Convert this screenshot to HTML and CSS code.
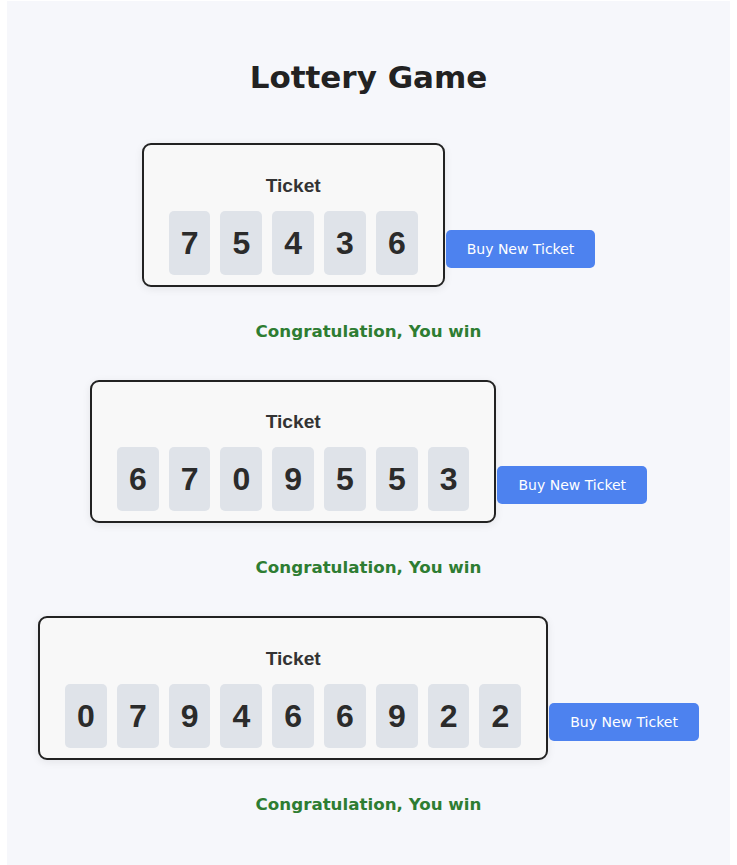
FILE: index.html
```html
<!DOCTYPE html>
<html lang="en">
<head>
<meta charset="utf-8">
<title>Lottery Game</title>
<link rel="stylesheet" href="styles.css">
</head>
<body>
<div class="app">
  <h1 class="title">Lottery Game</h1>

  <section class="game">
    <div class="row">
      <div class="ticket">
        <div class="ticket-label">Ticket</div>
        <div class="digits">
          <span class="digit">7</span><span class="digit">5</span><span class="digit">4</span><span class="digit">3</span><span class="digit">6</span>
        </div>
      </div>
      <button class="buy">Buy New Ticket</button>
    </div>
    <p class="message">Congratulation, You win</p>
  </section>

  <section class="game">
    <div class="row">
      <div class="ticket">
        <div class="ticket-label">Ticket</div>
        <div class="digits">
          <span class="digit">6</span><span class="digit">7</span><span class="digit">0</span><span class="digit">9</span><span class="digit">5</span><span class="digit">5</span><span class="digit">3</span>
        </div>
      </div>
      <button class="buy">Buy New Ticket</button>
    </div>
    <p class="message">Congratulation, You win</p>
  </section>

  <section class="game">
    <div class="row">
      <div class="ticket">
        <div class="ticket-label">Ticket</div>
        <div class="digits">
          <span class="digit">0</span><span class="digit">7</span><span class="digit">9</span><span class="digit">4</span><span class="digit">6</span><span class="digit">6</span><span class="digit">9</span><span class="digit">2</span><span class="digit">2</span>
        </div>
      </div>
      <button class="buy">Buy New Ticket</button>
    </div>
    <p class="message">Congratulation, You win</p>
  </section>
</div>
</body>
</html>
```

FILE: styles.css
```css
html, body {
  margin: 0;
  padding: 0;
  background: #ffffff;
}

body {
  font-family: "DejaVu Sans", Verdana, sans-serif;
  color: #222222;
}

.app {
  width: 98%;
  margin: 1px auto 0;
  background: #f6f7fb;
  padding: 0;
  height: 864px;
  box-sizing: border-box;
  overflow: hidden;
}

.title {
  margin: 58px 0 47px;
  font-size: 31px;
  font-weight: bold;
  line-height: 37px;
  text-align: center;
  color: #222222;
}

.game {
  display: flex;
  flex-direction: column;
  align-items: center;
}

.row {
  display: flex;
  align-items: last baseline;
  justify-content: center;
  gap: 1px;
}

.ticket {
  border: 2px solid #222222;
  border-radius: 9px;
  background: #f8f8f8;
  box-shadow: 0 2px 8px rgba(0, 0, 0, 0.08);
  padding: 29.5px 20px 10px;
  font-family: "Liberation Sans", Arial, sans-serif;
  text-align: center;
}

.ticket-label {
  font-size: 19.2px;
  font-weight: bold;
  color: #333333;
  line-height: 22px;
  margin-bottom: 14.1px;
}

.digits {
  display: flex;
  justify-content: center;
}

.digit {
  display: block;
  margin: 0 5px;
  padding: 0 12px;
  height: 64px;
  line-height: 64px;
  font-size: 32px;
  font-weight: bold;
  color: #2b2b2b;
  background: #dfe3e9;
  border-radius: 5px;
}

.buy {
  font-family: "DejaVu Sans", Verdana, sans-serif;
  font-size: 14px;
  line-height: 16px;
  padding: 11px 21px;
  color: #ffffff;
  background: #4d82ef;
  border: none;
  border-radius: 5px;
  cursor: pointer;
}

.message {
  margin: 34px 0 39px;
  font-size: 16.7px;
  line-height: 20px;
  font-weight: bold;
  color: #2e7d32;
}
```
